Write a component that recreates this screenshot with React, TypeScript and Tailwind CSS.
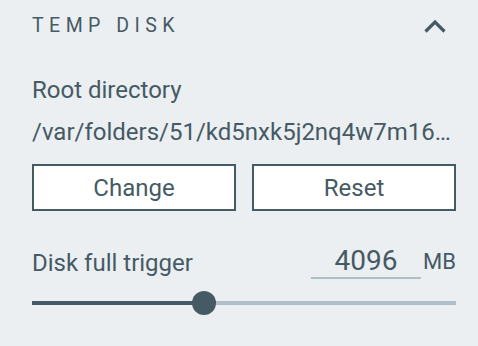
import React from "react";

export default function App() {
  const pct = 40.6;
  return (
    <div
      className="w-[478px] h-[346px] bg-[#eceff1] text-[#455a64] overflow-hidden"
      style={{ fontFamily: "Roboto, 'Liberation Sans', sans-serif" }}
    >
      <div className="pl-[32px] pr-[22px]">
        <div className="flex items-center justify-between h-[52px]">
          <span className="text-[19.5px] tracking-[0.28em] leading-none font-normal">TEMP DISK</span>
          <svg width="24" height="16" viewBox="0 0 24 16" className="mr-[9px]">
            <polyline points="2.5,13.5 12,4 21.5,13.5" fill="none" stroke="#455a64" strokeWidth="3.2" />
          </svg>
        </div>
        <div className="mt-[22px] text-[24px] leading-[32px]">Root directory</div>
        <div className="mt-[10px] text-[24px] leading-[32px] whitespace-nowrap overflow-hidden text-ellipsis">
          /var/folders/51/kd5nxk5j2nq4w7m16gn0000gn/T/
        </div>
        <div className="mt-[16px] grid grid-cols-2 gap-[16px]">
          <button className="h-[47px] bg-white border-2 border-[#455a64] text-[24px] text-[#455a64]">
            Change
          </button>
          <button className="h-[47px] bg-white border-2 border-[#455a64] text-[24px] text-[#455a64]">
            Reset
          </button>
        </div>
        <div className="mt-[34px] flex items-end justify-between">
          <span className="text-[24px] leading-[32px]">Disk full trigger</span>
          <div className="flex items-end">
            <div className="w-[110px] border-b-2 border-[#b0bec5] text-center text-[28px] leading-[32px]">
              4096
            </div>
            <span className="ml-[2px] mb-[3px] text-[22px] leading-[28px]">MB</span>
          </div>
        </div>
        <div className="relative mt-[12px] h-[24px] flex items-center">
          <div className="h-[4px] bg-[#455a64]" style={{ width: `${pct}%` }} />
          <div className="h-[4px] flex-1 bg-[#b0bec5]" />
          <div
            className="absolute top-0 w-[24px] h-[24px] rounded-full bg-[#455a64] -translate-x-1/2"
            style={{ left: `${pct}%` }}
          />
        </div>
      </div>
    </div>
  );
}
